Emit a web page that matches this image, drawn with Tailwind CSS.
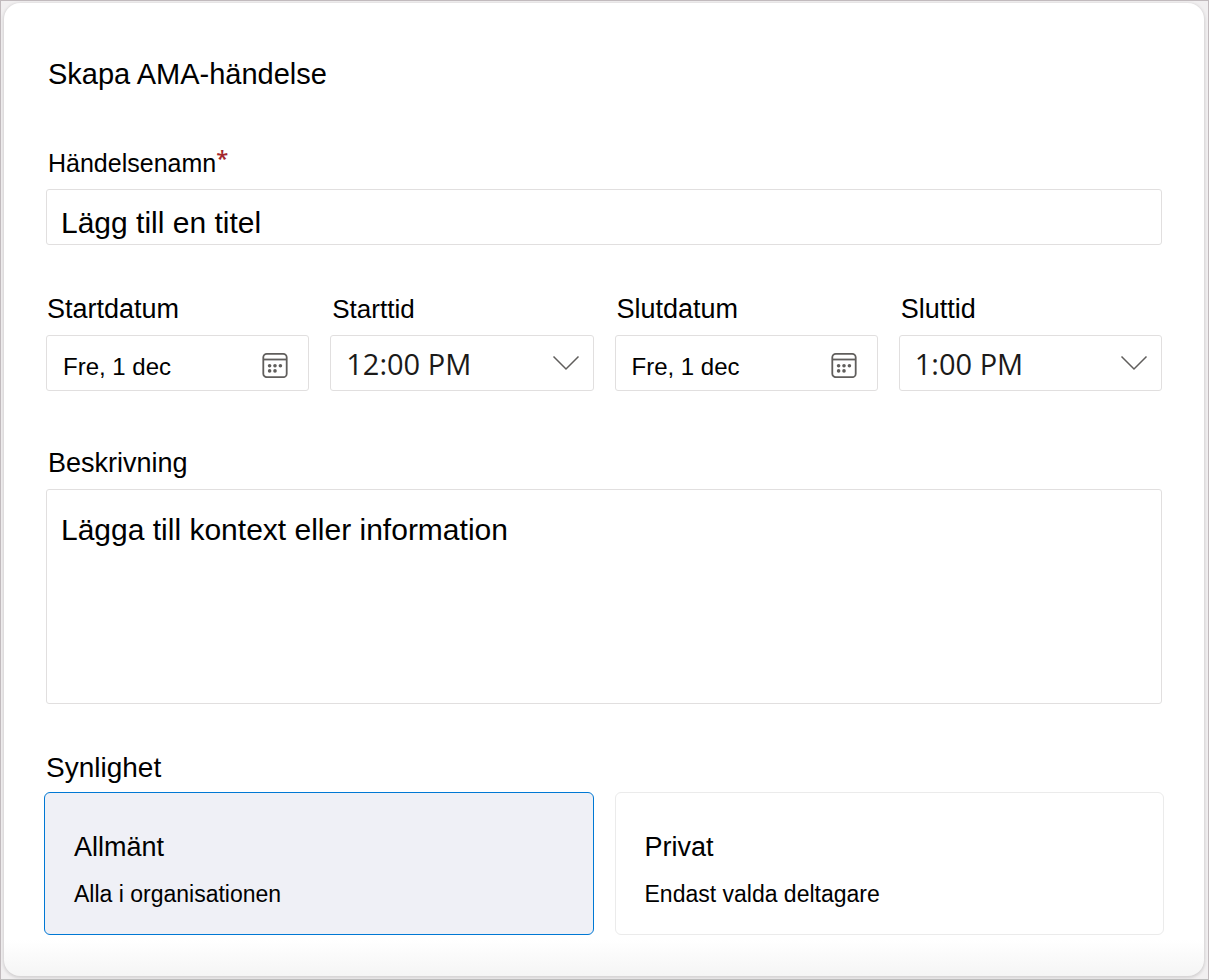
<!DOCTYPE html>
<html lang="sv">
<head>
<meta charset="utf-8">
<meta name="viewport" content="width=device-width, initial-scale=1">
<title>Skapa AMA-händelse</title>
<script src="https://cdn.jsdelivr.net/npm/@tailwindcss/browser@4"></script>
</head>
<body class="flex min-h-screen border border-b-[#bcbcbc] border-[#c1babd] bg-[#f1eff0] pt-0.5 pr-1 pb-[3px] pl-[3px] font-['Liberation_Sans',Arial,sans-serif] text-black">
<main class="flex-1 rounded-2xl bg-white bg-linear-to-t from-[#f5f5f5] to-white to-[36px] px-[42px] pt-[55px] pb-10 shadow-[0_1px_3px_1px_rgba(0,0,0,0.12)]">
  <form>
    <h1 class="pl-0.5 text-[29px] leading-8">Skapa AMA-händelse</h1>

    <div class="mt-[57px]">
      <label for="name" class="flex items-start pl-0.5 text-[25px] leading-8">Händelsenamn<span class="font-['Open_Sans',sans-serif] text-[22px] leading-5 font-semibold text-[#a4262c]">*</span></label>
      <input id="name" type="text" required placeholder="Lägg till en titel" class="mt-2.5 block h-14 w-full rounded-[3px] border border-[#e1dfdf] bg-white px-3.5 pt-3 text-[30px] placeholder:text-black">
    </div>

    <div class="mt-12 grid grid-cols-4 gap-[21px]">
      <div>
        <label for="start-date" class="block pl-px text-[27px] leading-8">Startdatum</label>
        <div class="mt-2.5 flex h-14 items-center rounded-[3px] border border-[#e1dfdf] bg-white pr-5 pl-4">
          <input id="start-date" type="text" value="Fre, 1 dec" class="h-full min-w-0 flex-1 pt-2 text-[24px]">
          <button type="button" aria-label="Välj startdatum" class="mt-1">
            <svg class="size-[26px]" viewBox="0 0 26 26" fill="none" stroke="#605e5c" stroke-width="1.8"><rect x="1.3" y="1.8" width="23.4" height="23.4" rx="3.5"/><path d="M1.3 7.500h23.4"/><g fill="#605e5c" stroke="none"><circle cx="7.6" cy="13.8" r="1.8"/><circle cx="13" cy="13.8" r="1.8"/><circle cx="18.4" cy="13.8" r="1.8"/><circle cx="7.6" cy="18.900" r="1.8"/><circle cx="13" cy="18.900" r="1.8"/></g></svg>
          </button>
        </div>
      </div>
      <div>
        <label for="start-time" class="block pl-0.5 text-[26px] leading-8">Starttid</label>
        <div class="relative mt-2.5">
          <select id="start-time" class="block h-14 w-full appearance-none rounded-[3px] border border-[#e1dfdf] bg-white pt-0.5 pr-12 pl-[15px] font-['Open_Sans',sans-serif] text-[29px] text-[#1b1a19]"><option>12:00 PM</option></select>
          <svg class="pointer-events-none absolute top-5 right-3.5 h-4 w-7" viewBox="0 0 28 16" fill="none" stroke="#605e5c" stroke-width="1.5"><path d="M1.5 1.5 14 14 26.500 1.500"/></svg>
        </div>
      </div>
      <div>
        <label for="end-date" class="block pl-0.5 text-[27px] leading-8">Slutdatum</label>
        <div class="mt-2.5 flex h-14 items-center rounded-[3px] border border-[#e1dfdf] bg-white pr-5 pl-4">
          <input id="end-date" type="text" value="Fre, 1 dec" class="h-full min-w-0 flex-1 pt-2 text-[24px]">
          <button type="button" aria-label="Välj slutdatum" class="mt-1">
            <svg class="size-[26px]" viewBox="0 0 26 26" fill="none" stroke="#605e5c" stroke-width="1.8"><rect x="1.3" y="1.8" width="23.4" height="23.4" rx="3.5"/><path d="M1.3 7.500h23.4"/><g fill="#605e5c" stroke="none"><circle cx="7.6" cy="13.8" r="1.8"/><circle cx="13" cy="13.8" r="1.8"/><circle cx="18.4" cy="13.8" r="1.8"/><circle cx="7.6" cy="18.900" r="1.8"/><circle cx="13" cy="18.900" r="1.8"/></g></svg>
          </button>
        </div>
      </div>
      <div>
        <label for="end-time" class="block pl-0.5 text-[27px] leading-8">Sluttid</label>
        <div class="relative mt-2.5">
          <select id="end-time" class="block h-14 w-full appearance-none rounded-[3px] border border-[#e1dfdf] bg-white pt-0.5 pr-12 pl-[15px] font-['Open_Sans',sans-serif] text-[29px] text-[#1b1a19]"><option>1:00 PM</option></select>
          <svg class="pointer-events-none absolute top-5 right-3.5 h-4 w-7" viewBox="0 0 28 16" fill="none" stroke="#605e5c" stroke-width="1.5"><path d="M1.5 1.5 14 14 26.500 1.500"/></svg>
        </div>
      </div>
    </div>

    <div class="mt-14">
      <label for="description" class="block pl-0.5 text-[27px] leading-8">Beskrivning</label>
      <textarea id="description" placeholder="Lägga till kontext eller information" class="mt-2.5 block h-[215px] w-full resize-none rounded-[3px] border border-[#e1dfdf] bg-white px-3.5 pt-5 text-[30px] leading-10 placeholder:text-black"></textarea>
    </div>

    <fieldset class="-mx-0.5 mt-12">
      <legend class="pl-0.5 text-[28px] leading-8">Synlighet</legend>
      <div class="mt-2 grid grid-cols-2 gap-[21px]">
        <label class="relative flex flex-col gap-[15px] rounded-md border border-[#ebebeb] px-[29px] pt-[38px] pb-6 leading-8 has-[:checked]:border-[#0078d4] has-[:checked]:bg-[#eff0f6]">
          <input type="radio" name="visibility" value="public" checked class="sr-only">
          <span class="text-[27px]">Allmänt</span>
          <span class="text-[23px]">Alla i organisationen</span>
        </label>
        <label class="relative flex flex-col gap-[15px] rounded-md border border-[#ebebeb] px-[29px] pt-[38px] pb-6 leading-8 has-[:checked]:border-[#0078d4] has-[:checked]:bg-[#eff0f6]">
          <input type="radio" name="visibility" value="private" class="sr-only">
          <span class="text-[27px]">Privat</span>
          <span class="text-[23px]">Endast valda deltagare</span>
        </label>
      </div>
    </fieldset>
  </form>
</main>
</body>
</html>
